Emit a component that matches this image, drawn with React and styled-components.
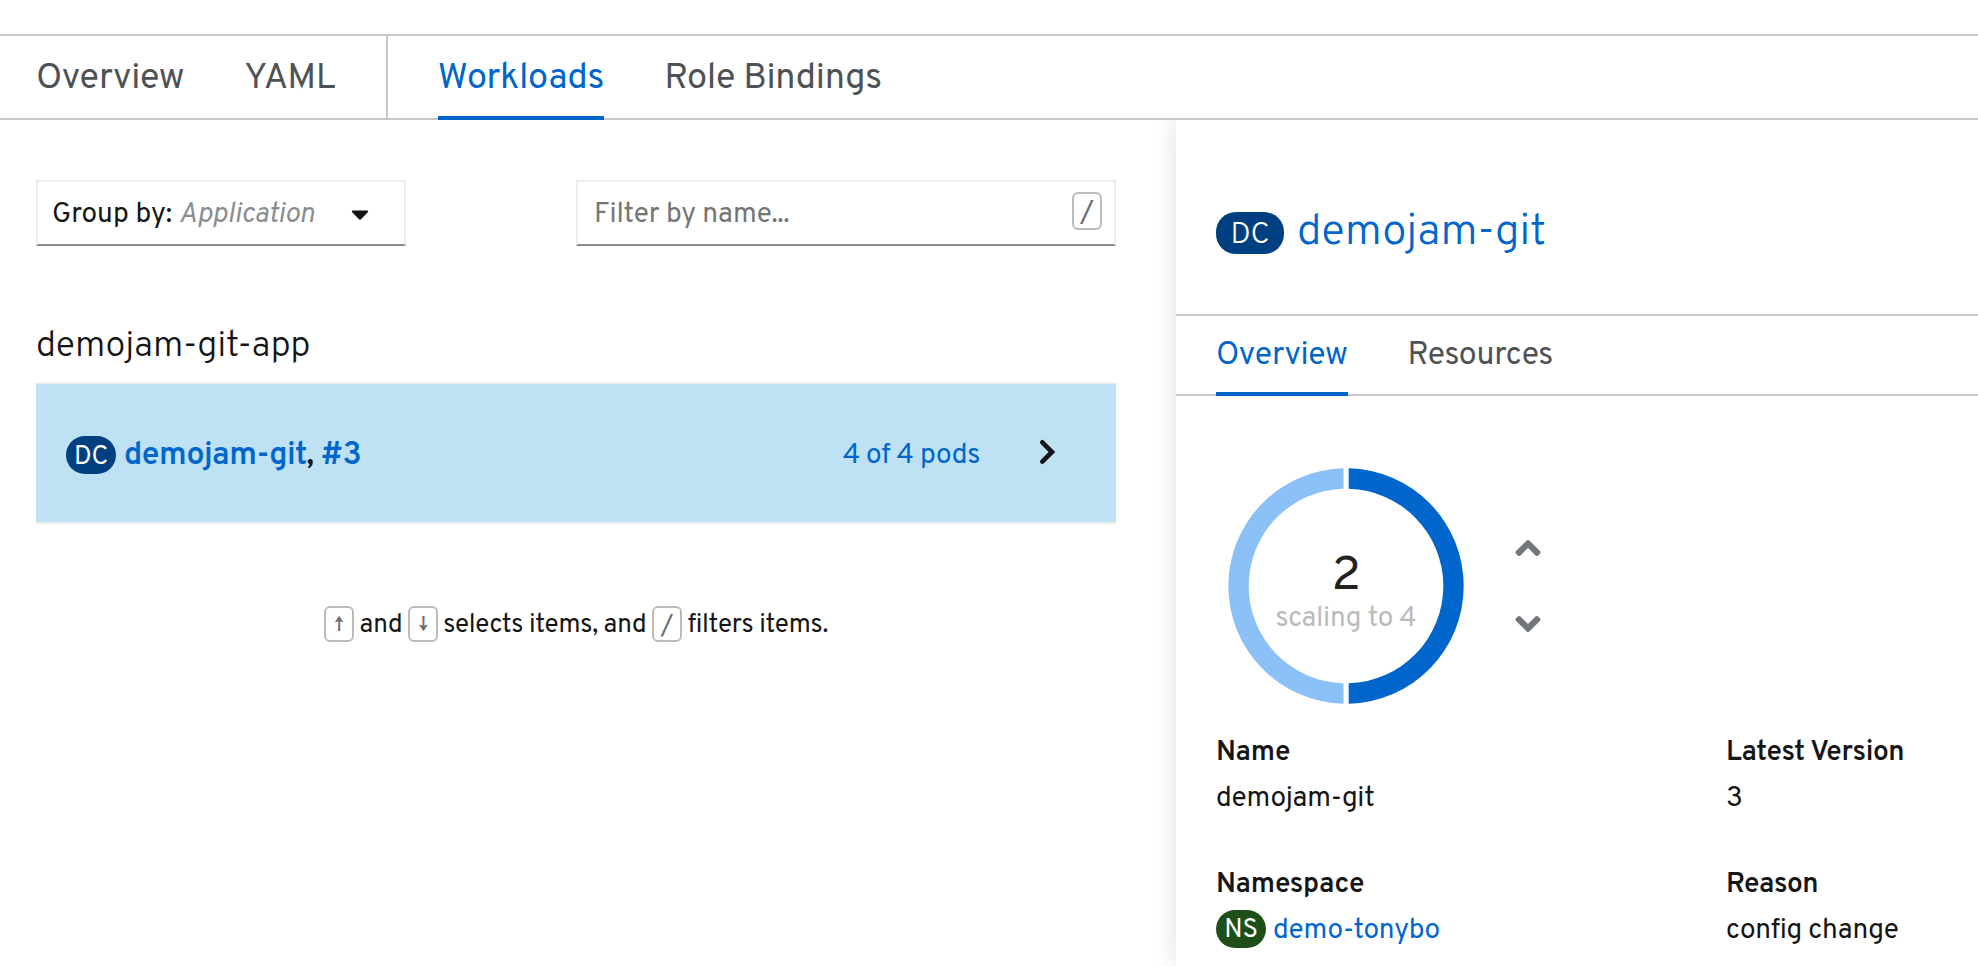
import React from 'react';
import styled, { createGlobalStyle } from 'styled-components';
import { FaAngleDown, FaAngleUp, FaCaretDown } from 'react-icons/fa';

const GlobalStyle = createGlobalStyle`
  *, *::before, *::after { box-sizing: border-box; }
  html, body, #root { height: 100%; }
  body {
    margin: 0;
    overflow: hidden;
    background: #fff;
    color: #151515;
    font-family: Overpass, Roboto, "Liberation Sans", sans-serif;
    font-size: 28px;
    letter-spacing: -0.01em;
  }
`;

const Page = styled.div`
  display: flex;
  flex-direction: column;
  height: 100%;
  padding-top: 34px;
`;

const TabBar = styled.nav`
  display: flex;
  flex: none;
  height: ${(p) => p.$height}px;
  padding: 0 ${(p) => p.$inset}px;
  gap: 60px;
  border-top: 2px solid #c8c8c8;
  box-shadow: inset 0 -2px #c8c8c8;
  font-size: ${(p) => p.$size}px;
`;

const TabGroup = styled.div`
  display: flex;
  gap: 60px;
  & + & {
    margin-left: -10px;
    padding-left: 50px;
    border-left: 2px solid #c8c8c8;
    margin-bottom: 2px;
  }
`;

const Tab = styled.a`
  height: ${(p) => p.$height}px;
  line-height: ${(p) => p.$line}px;
  white-space: nowrap;
  color: ${(p) => (p.$active ? '#06c' : '#4f5255')};
  box-shadow: ${(p) => (p.$active ? 'inset 0 -4px #06c' : 'none')};
`;

const Split = styled.div`
  display: flex;
  flex: 1;
  min-height: 0;
  overflow: hidden;
`;

const Main = styled.main`
  width: 1176px;
  flex: none;
  padding: 60px 60px 0 36px;
`;

const Toolbar = styled.div`
  display: flex;
  justify-content: space-between;
`;

const Field = styled.div`
  display: flex;
  width: ${(p) => p.$width}px;
  height: 66px;
  padding-left: ${(p) => p.$pad}px;
  border: 2px solid #ededed;
  border-bottom-color: #8a8d90;
  line-height: 66px;
  white-space: pre;
`;

const FieldLabel = styled.span`
  letter-spacing: 0;
`;

const Placeholder = styled.span`
  color: #757575;
  letter-spacing: -0.2px;
`;

const Selection = styled.em`
  color: #8a8d90;
  letter-spacing: 0;
`;

const CaretIcon = styled(FaCaretDown)`
  width: 28px;
  height: 28px;
  margin: 18px 30px 0 auto;
`;

const Key = styled.kbd`
  flex: none;
  width: 30px;
  height: ${(p) => p.$height}px;
  border: 2px solid #bbb;
  border-radius: 6px;
  color: #6a6e73;
  font: ${(p) => p.$size}px/${(p) => p.$line}px Overpass, Roboto, sans-serif;
  text-align: center;
`;

const FilterKey = styled(Key)`
  margin: 10px 12px 0 auto;
`;

const AppHeading = styled.h2`
  margin: 79px 0 13px;
  font-size: 36px;
  font-weight: 300;
  line-height: 44px;
  letter-spacing: -0.3px;
`;

const WorkloadRow = styled.div`
  display: flex;
  align-items: center;
  height: 142px;
  padding: 0 60px 0 30px;
  border: solid #ededed;
  border-width: 2px 0;
  background: #bee1f4;
`;

const Badge = styled.span`
  flex: none;
  width: ${(p) => p.$width}px;
  height: ${(p) => p.$height}px;
  margin-top: ${(p) => p.$drop}px;
  border-radius: 20px;
  background: ${(p) => p.$color};
  color: #fff;
  font-size: ${(p) => p.$size}px;
  line-height: ${(p) => p.$line}px;
  text-align: center;
`;

const WorkloadName = styled.span`
  margin: 6px auto 0 8px;
  font-size: 32px;
  font-weight: 600;
  line-height: 40px;
  letter-spacing: -0.56px;
`;

const Link = styled.a`
  color: #06c;
`;

const PodCount = styled(Link)`
  margin-top: 5px;
  line-height: 40px;
`;

const RowArrow = styled.svg`
  display: block;
  margin: -3px 0 0 59px;
`;

const Hint = styled.p`
  display: flex;
  justify-content: center;
  align-items: center;
  gap: 5.5px;
  height: 36px;
  margin: 82px 0 0;
  font-size: 26px;
  line-height: 36px;
`;

const HintText = styled.span`
  margin-top: 4px;
`;

const Panel = styled.aside`
  flex: 1;
  box-shadow: 0 0 24px rgba(3, 3, 3, 0.13);
`;

const PanelHeader = styled.header`
  display: flex;
  align-items: center;
  height: 194px;
  padding: 32px 40px 0;
  font-size: 44px;
  font-weight: 300;
`;

const PanelTitle = styled(Link)`
  margin-left: 13px;
  line-height: 60px;
`;

const PodRow = styled.div`
  display: flex;
  align-items: center;
  height: 236px;
  margin: 72px 0 26px 52px;
`;

const Scaler = styled.div`
  display: flex;
  flex-direction: column;
  gap: 36px;
  margin: 0 0 0 44px;
  color: #72767b;
  font-size: 40px;
  svg { display: block; }
`;

const DonutLabel = styled.text`
  fill: ${(p) => p.$color};
  font-size: ${(p) => p.$size}px;
  letter-spacing: -0.01em;
`;

const Details = styled.dl`
  display: grid;
  grid-template-columns: 510px 1fr;
  row-gap: 40px;
  margin: 0 0 0 40px;
  line-height: 46px;
`;

const Term = styled.dt`
  font-weight: 600;
`;

const Value = styled.dd`
  display: flex;
  align-items: center;
  gap: 7px;
  height: 46px;
  margin: 0;
`;

const Donut = () => (
  <svg width="236" height="236" viewBox="-118 -118 236 236">
    <path d="M2.7-117.669A117.7 117.7 0 0 1 2.7 117.669V97.263A97.3 97.3 0 0 0 2.7-97.263Z" fill="#06c" />
    <path d="M-2.5-117.673A117.7 117.7 0 0 0-2.5 117.673V97.268A97.3 97.3 0 0 1-2.5-97.268Z" fill="#8bc1f7" />
    <DonutLabel y="2.5" textAnchor="middle" $size={48} $color="#222">2</DonutLabel>
    <DonutLabel y="40" textAnchor="middle" $size={28} $color="#bbb">scaling to 4</DonutLabel>
  </svg>
);

const Detail = ({ label, children }) => (
  <div>
    <Term>{label}</Term>
    <Value>{children}</Value>
  </div>
);

const MainTab = (p) => <Tab $height={84} $line={86} {...p} />;
const PanelTab = (p) => <Tab $height={80} $line={81} {...p} />;

export default function App() {
  return (
    <Page>
      <GlobalStyle />
      <TabBar $height={86} $inset={36} $size={36}>
        <TabGroup>
          <MainTab>Overview</MainTab>
          <MainTab>YAML</MainTab>
        </TabGroup>
        <TabGroup>
          <MainTab $active>Workloads</MainTab>
          <MainTab>Role Bindings</MainTab>
        </TabGroup>
      </TabBar>
      <Split>
        <Main>
          <Toolbar>
            <Field $width={370} $pad={14}>
              <FieldLabel>{'Group by: '}</FieldLabel>
              <Selection>Application</Selection>
              <CaretIcon />
            </Field>
            <Field $width={540} $pad={16}>
              <Placeholder>Filter by name...</Placeholder>
              <FilterKey $height={38} $size={28} $line={41}>/</FilterKey>
            </Field>
          </Toolbar>
          <AppHeading>demojam-git-app</AppHeading>
          <WorkloadRow>
            <Badge $width={50} $height={38} $drop={4} $size={26} $line={43} $color="#004080">DC</Badge>
            <WorkloadName>
              <Link>demojam-git</Link>, <Link>#3</Link>
            </WorkloadName>
            <PodCount>4 of 4 pods</PodCount>
            <RowArrow width="17" height="26" viewBox="0 0 17 26">
              <path d="M3.3 3.3 13 13l-9.7 9.7" fill="none" stroke="#151515" strokeWidth="4.6" strokeLinecap="round" />
            </RowArrow>
          </WorkloadRow>
          <Hint>
            <Key $height={36} $size={20} $line={36}>↑</Key>
            <HintText>and</HintText>
            <Key $height={36} $size={20} $line={36}>↓</Key>
            <HintText>selects items, and</HintText>
            <Key $height={36} $size={26} $line={37}>/</Key>
            <HintText>filters items.</HintText>
          </Hint>
        </Main>
        <Panel>
          <PanelHeader>
            <Badge $width={68} $height={42} $drop={0} $size={30} $line={48} $color="#004080">DC</Badge>
            <PanelTitle>demojam-git</PanelTitle>
          </PanelHeader>
          <TabBar $height={82} $inset={40} $size={32}>
            <PanelTab $active>Overview</PanelTab>
            <PanelTab>Resources</PanelTab>
          </TabBar>
          <PodRow>
            <Donut />
            <Scaler>
              <FaAngleUp />
              <FaAngleDown />
            </Scaler>
          </PodRow>
          <Details>
            <Detail label="Name">demojam-git</Detail>
            <Detail label="Latest Version">3</Detail>
            <Detail label="Namespace">
              <Badge $width={50} $height={38} $drop={-4} $size={26} $line={41} $color="#1e4f18">NS</Badge>
              <Link>demo-tonybo</Link>
            </Detail>
            <Detail label="Reason">config change</Detail>
          </Details>
        </Panel>
      </Split>
    </Page>
  );
}
